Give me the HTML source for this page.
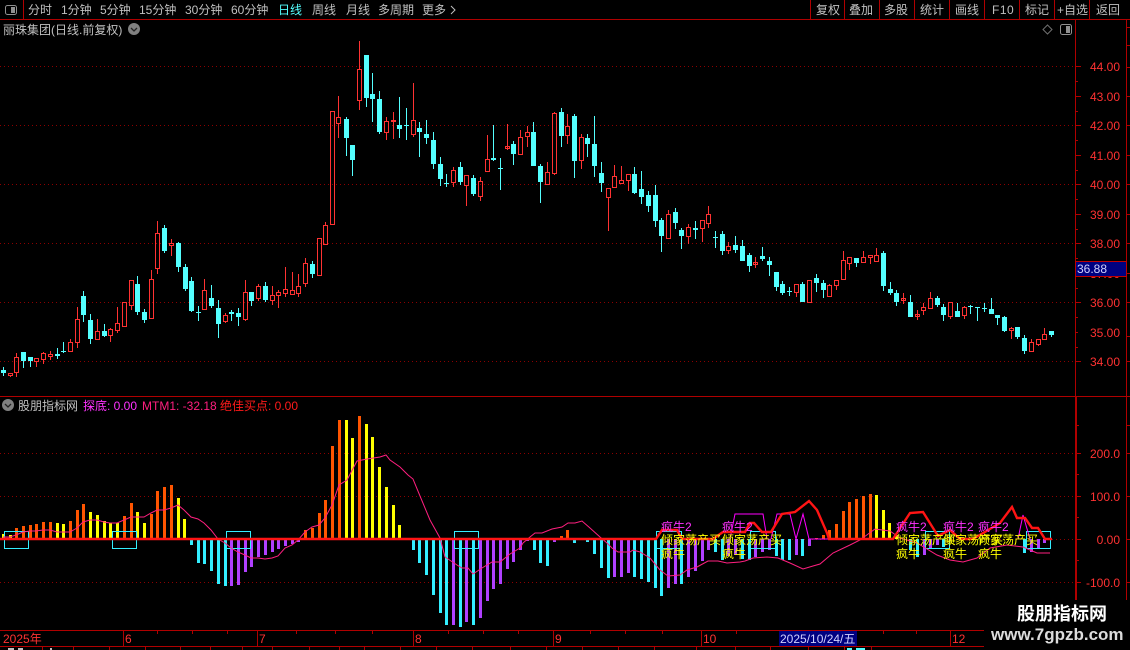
<!DOCTYPE html>
<html lang="zh"><head><meta charset="utf-8"><title>丽珠集团</title>
<style>
html,body{margin:0;padding:0;background:#000;width:1130px;height:650px;overflow:hidden}
svg{display:block}
text{font-family:"Liberation Sans","WenQuanYi Zen Hei","Noto Sans CJK SC",sans-serif;font-size:12px}
.t{fill:#c0c0c0}
.a{fill:#ff3232;text-anchor:end}
.d{fill:#ff3232}
.y{fill:#ffff00}
.m{fill:#ff32ff}
</style></head><body>
<svg width="1130" height="650" viewBox="0 0 1130 650" xmlns="http://www.w3.org/2000/svg">
<rect width="1130" height="650" fill="#000"/>
<!-- toolbar -->
<g fill="none" stroke="#b00000" shape-rendering="crispEdges">
<path d="M0 19.5H1130M23.5 0V19M810.5 0V19M844.5 0V19M879.5 0V19M914.5 0V19M949.5 0V19M984.5 0V19M1019.5 0V19M1054.5 0V19M1089.5 0V19M1126.5 20V600M1075.5 20V600M0 396.5H1130M0 630.5H984M0 646.5H984"/>
<path d="M1076 66.5h5M1076 96.5h5M1076 125.5h5M1076 155.5h5M1076 184.5h5M1076 214.5h5M1076 243.5h5M1076 302.5h5M1076 332.5h2M1076 361.5h5M1076 81.5h2M1076 111.5h2M1076 140.5h2M1076 170.5h2M1076 199.5h2M1076 229.5h2M1076 258.5h2M1076 288.5h2M1076 317.5h2M1076 347.5h2M1076 453.5h5M1076 496.5h5M1076 539.5h5M1076 582.5h5M1076 425.5h3M1076 474.5h3M1076 517.5h3M1076 560.5h3"/>
<path d="M1127 27.5h3M1127 45.5h3M1127 67.5h3M1127 96.5h3M1127 125.5h3M1127 155.5h3M1127 184.5h3M1127 214.5h3M1127 243.5h3M1127 273.5h3M1127 302.5h3M1127 336.5h3M1127 361.5h3M1127 425.5h3M1127 453.5h3M1127 496.5h3M1127 539.5h3M1127 582.5h3"/>
<path d="M123.5 631V646M257.5 631V646M413.5 631V646M553.5 631V646M701.5 631V646M950.5 631V646M157.5 631v3M192.5 631v3M227.5 631v3M296.5 631v3M335.5 631v3M372.5 631v3M448.5 631v3M483.5 631v3M518.5 631v3M590.5 631v3M625.5 631v3M662.5 631v3M736.5 631v3M883.5 631v3M916.5 631v3M42.5 647V650M73.5 647V650M109.5 647V650M145.5 647V650M180.5 647V650M210.5 647V650M242.5 647V650M272.5 647V650M309.5 647V650M339.5 647V650M364.5 647V650M400.5 647V650M436.5 647V650M472.5 647V650M510.5 647V650M546.5 647V650M582.5 647V650M618.5 647V650M654.5 647V650M696.5 647V650M735.5 647V650M770.5 647V650M808.5 647V650M844.5 647V650M871.5 647V650"/>
</g>
<rect x="1075" y="397" width="2" height="203" fill="#b00000"/>
<g stroke="#8c0000" stroke-dasharray="1 3" fill="none" shape-rendering="crispEdges">
<path d="M0 66.5H1075M0 125.5H1075M0 184.5H1075M0 243.5H1075M0 302.5H1075M0 361.5H1075M0 453.5H1075M0 496.5H1075M0 539.5H1075M0 582.5H1075"/>
</g>
<!-- toolbar icon & labels -->
<rect x="5.5" y="5.5" width="11" height="9" rx="2" fill="none" stroke="#909090"/><rect x="11" y="7" width="4" height="6" fill="#909090"/>
<g class="t">
<text class="t" x="28" y="14">分时</text><text class="t" x="61" y="14">1分钟</text><text class="t" x="100" y="14">5分钟</text><text class="t" x="139" y="14">15分钟</text><text class="t" x="185" y="14">30分钟</text><text class="t" x="231" y="14">60分钟</text>
<text x="278" y="14" fill="#54ffff">日线</text>
<text class="t" x="312" y="14">周线</text><text class="t" x="346" y="14">月线</text><text class="t" x="378" y="14">多周期</text><text class="t" x="422" y="14">更多</text>
<text class="t" x="816" y="14">复权</text><text class="t" x="849" y="14">叠加</text><text class="t" x="884" y="14">多股</text><text class="t" x="920" y="14">统计</text><text class="t" x="955" y="14">画线</text><text class="t" x="992" y="14" style="letter-spacing:.5px">F10</text><text class="t" x="1025" y="14">标记</text><text class="t" x="1057" y="14">+自选</text><text class="t" x="1096" y="14">返回</text>
<text class="t" x="3" y="34">丽珠集团(日线.前复权)</text>
<text class="t" x="18" y="410">股朋指标网</text>
</g>
<path d="M451 6l4 4-4 4" fill="none" stroke="#c0c0c0"/>
<circle cx="134" cy="29" r="6" fill="#808080"/><path d="M131 28l3 3 3-3" fill="none" stroke="#222" stroke-width="1.3"/>
<circle cx="8" cy="405" r="6" fill="#808080"/><path d="M5 404l3 3 3-3" fill="none" stroke="#222" stroke-width="1.3"/>
<path d="M1047.5 25l4.5 4.5-4.5 4.5-4.5-4.5z" fill="none" stroke="#707070"/>
<rect x="1060.5" y="24.5" width="11" height="10" rx="2" fill="none" stroke="#909090"/><rect x="1066" y="26" width="4" height="7" fill="#909090"/>
<text x="83" y="410" class="m">探底: 0.00</text>
<text x="142" y="410" fill="#ff1f7f">MTM1: -32.18</text>
<text x="220" y="410" fill="#ff1a1a">绝佳买点: 0.00</text>
<!-- price axis -->
<g class="a">
<text class="a" x="1120" y="71">44.00</text><text class="a" x="1120" y="101">43.00</text><text class="a" x="1120" y="130">42.00</text><text class="a" x="1120" y="160">41.00</text><text class="a" x="1120" y="189">40.00</text><text class="a" x="1120" y="219">39.00</text><text class="a" x="1120" y="248">38.00</text><text class="a" x="1120" y="278">37.00</text><text class="a" x="1120" y="307">36.00</text><text class="a" x="1120" y="337">35.00</text><text class="a" x="1120" y="366">34.00</text>
<text class="a" x="1120" y="458">200.0</text><text class="a" x="1120" y="501">100.0</text><text class="a" x="1120" y="544">0.00</text><text class="a" x="1120" y="587">-100.0</text>
</g>
<rect x="1075.5" y="261.5" width="51" height="15" fill="#000080" stroke="#c00000"/>
<text x="1077" y="273" fill="#d0d0ff">36.88</text>
<!-- candles -->
<g fill="none" shape-rendering="crispEdges">
<path stroke="#54ffff" d="M3.5 367V376M23.5 352V368M30.5 357V367M57.5 348V359M63.5 342V353M83.5 291V322M90.5 314V344M104.5 324V337M137.5 276V315M144.5 309V323M164.5 225V253M178.5 242V272M185.5 264V291M191.5 277V312M198.5 306V321M211.5 285V308M218.5 300V338M231.5 310V321M238.5 308V326M251.5 292V306M265.5 282V302M312.5 261V278M346.5 117V156M352.5 145V176M366.5 55V107M372.5 73V122M379.5 91V134M399.5 97V138M406.5 108V140M419.5 122V157M426.5 120V144M433.5 132V169M440.5 157V186M446.5 174V187M460.5 162V185M473.5 175V196M493.5 125V161M500.5 158V190M513.5 141V165M533.5 122V166M540.5 164V203M561.5 108V147M574.5 114V178M587.5 134V157M594.5 116V177M601.5 162V192M634.5 167V194M641.5 171V204M648.5 191V212M655.5 185V227M661.5 218V252M675.5 208V229M681.5 228V249M695.5 221V239M715.5 231V248M722.5 231V255M735.5 236V253M742.5 240V261M749.5 253V272M762.5 247V261M769.5 257V276M776.5 272V291M782.5 281V295M789.5 287V296M802.5 282V302M816.5 274V292M823.5 280V298M856.5 258V267M883.5 251V291M890.5 282V295M896.5 290V306M910.5 295V317M937.5 296V307M943.5 304V321M957.5 303V317M970.5 305V314M977.5 307V321M984.5 303V312M991.5 298V314M997.5 315V325M1004.5 316V332M1017.5 327V339M1024.5 335V354M1051.5 331V337"/>
<path stroke="#54ffff" stroke-width="5" d="M3.5 370V373M23.5 352V361M30.5 357V361M57.5 354V356M63.5 351V352M83.5 296V315M90.5 320V339M104.5 331V336M137.5 284V312M144.5 312V320M164.5 228V251M178.5 243V267M185.5 267V289M191.5 281V311M198.5 312V313M211.5 298V306M218.5 308V324M231.5 312V314M238.5 313V317M251.5 292V301M265.5 286V300M312.5 264V274M346.5 119V138M352.5 145V160M366.5 55V98M372.5 94V99M379.5 99V132M399.5 125V129M406.5 125V126M419.5 128V132M426.5 134V138M433.5 140V164M440.5 164V179M446.5 183V184M460.5 167V182M473.5 178V194M493.5 158V160M500.5 168V169M513.5 144V154M533.5 132V166M540.5 166V182M561.5 112V136M574.5 116V161M587.5 138V144M594.5 144V166M601.5 173V183M634.5 174V193M641.5 189V197M648.5 195V206M655.5 195V221M661.5 220V236M675.5 212V223M681.5 230V236M695.5 228V230M715.5 237V238M722.5 234V251M735.5 245V250M742.5 246V261M749.5 255V266M762.5 256V259M769.5 261V265M776.5 272V287M782.5 284V293M789.5 291V292M802.5 284V302M816.5 278V283M823.5 283V290M856.5 258V263M883.5 253V286M890.5 289V293M896.5 293V302M910.5 302V317M937.5 298V305M943.5 307V315M957.5 311V317M970.5 306V307M977.5 307V308M984.5 308V309M991.5 309V314M997.5 315V318M1004.5 317V331M1017.5 327V337M1024.5 338V351M1051.5 331V335"/>
<path stroke="#ff3232" d="M10.5 376V377M16.5 353V357M16.5 373V377M36.5 362V367M43.5 352V353M43.5 360V364M50.5 351V354M50.5 357V360M70.5 339V342M77.5 307V319M77.5 343V348M97.5 319V331M110.5 328V329M110.5 336V342M117.5 307V323M117.5 331V333M131.5 306V310M151.5 270V279M157.5 221V233M157.5 269V274M171.5 239V243M171.5 246V256M204.5 279V290M225.5 313V315M225.5 322V323M245.5 280V292M245.5 320V321M258.5 284V286M258.5 299V301M272.5 286V295M272.5 301V305M278.5 290V292M278.5 296V308M285.5 267V289M285.5 294V297M292.5 272V290M298.5 274V286M298.5 294V297M305.5 258V263M305.5 284V287M325.5 222V225M338.5 96V117M338.5 124V138M359.5 41V69M359.5 101V110M386.5 117V121M386.5 133V140M393.5 112V139M413.5 83V120M413.5 135V137M453.5 167V170M453.5 183V187M466.5 186V206M480.5 177V181M480.5 197V201M487.5 135V159M507.5 124V150M520.5 130V137M527.5 126V132M527.5 137V147M547.5 162V172M554.5 112V113M554.5 174V175M567.5 114V126M567.5 136V144M581.5 134V137M581.5 161V169M608.5 198V231M614.5 165V176M621.5 166V180M628.5 181V191M668.5 210V214M688.5 224V227M688.5 237V244M702.5 229V242M708.5 206V214M708.5 224V228M728.5 242V246M728.5 251V254M755.5 257V268M796.5 293V297M829.5 284V285M836.5 286V290M843.5 251V260M849.5 264V270M863.5 251V257M870.5 258V264M876.5 248V255M903.5 293V304M917.5 310V320M923.5 303V307M923.5 311V315M930.5 292V298M950.5 317V319M964.5 306V307M964.5 316V319M1011.5 327V328M1011.5 331V339M1031.5 339V342M1038.5 345V346M1044.5 328V334M1044.5 340V340"/>
<path stroke="#ff3232" d="M8.5 373.5h4V375.5h-4zM14.5 357.5h4V372.5h-4zM34.5 358.5h4V361.5h-4zM41.5 353.5h4V359.5h-4zM48.5 354.5h4V356.5h-4zM68.5 342.5h4V351.5h-4zM75.5 319.5h4V342.5h-4zM95.5 331.5h4V339.5h-4zM108.5 329.5h4V335.5h-4zM115.5 323.5h4V330.5h-4zM122.5 302.5h4V326.5h-4zM129.5 280.5h4V305.5h-4zM149.5 279.5h4V318.5h-4zM155.5 233.5h4V268.5h-4zM169.5 243.5h4V245.5h-4zM202.5 290.5h4V309.5h-4zM223.5 315.5h4V321.5h-4zM243.5 292.5h4V319.5h-4zM256.5 286.5h4V298.5h-4zM270.5 295.5h4V300.5h-4zM276.5 292.5h4V295.5h-4zM283.5 289.5h4V293.5h-4zM290.5 290.5h4V294.5h-4zM296.5 286.5h4V293.5h-4zM303.5 263.5h4V283.5h-4zM317.5 238.5h4V275.5h-4zM323.5 225.5h4V244.5h-4zM330.5 111.5h4V224.5h-4zM336.5 117.5h4V123.5h-4zM357.5 69.5h4V100.5h-4zM384.5 121.5h4V132.5h-4zM391.5 120.5h4V121.5h-4zM411.5 120.5h4V134.5h-4zM451.5 170.5h4V182.5h-4zM464.5 175.5h4V185.5h-4zM478.5 181.5h4V196.5h-4zM485.5 159.5h4V171.5h-4zM505.5 146.5h4V148.5h-4zM518.5 137.5h4V154.5h-4zM525.5 132.5h4V136.5h-4zM545.5 172.5h4V184.5h-4zM552.5 113.5h4V173.5h-4zM565.5 126.5h4V135.5h-4zM579.5 137.5h4V160.5h-4zM606.5 188.5h4V197.5h-4zM612.5 176.5h4V187.5h-4zM619.5 180.5h4V183.5h-4zM626.5 174.5h4V180.5h-4zM666.5 214.5h4V238.5h-4zM686.5 227.5h4V236.5h-4zM700.5 220.5h4V228.5h-4zM706.5 214.5h4V223.5h-4zM726.5 246.5h4V250.5h-4zM753.5 262.5h4V264.5h-4zM794.5 284.5h4V292.5h-4zM807.5 280.5h4V302.5h-4zM827.5 285.5h4V296.5h-4zM834.5 280.5h4V285.5h-4zM841.5 260.5h4V279.5h-4zM847.5 257.5h4V263.5h-4zM861.5 257.5h4V262.5h-4zM868.5 255.5h4V257.5h-4zM874.5 255.5h4V261.5h-4zM901.5 298.5h4V300.5h-4zM915.5 314.5h4V316.5h-4zM921.5 307.5h4V310.5h-4zM928.5 298.5h4V308.5h-4zM948.5 302.5h4V316.5h-4zM962.5 307.5h4V315.5h-4zM1009.5 328.5h4V330.5h-4zM1029.5 342.5h4V351.5h-4zM1036.5 339.5h4V344.5h-4zM1042.5 334.5h4V339.5h-4z"/>
</g>
<!-- indicator bars -->
<g fill="none" stroke-width="3" shape-rendering="crispEdges">
<path stroke="#ff5500" d="M16.5 539V528M23.5 539V526M30.5 539V525M36.5 539V524M43.5 539V522M50.5 539V522M70.5 539V521M77.5 539V510M83.5 539V504M124.5 539V516M131.5 539V503M151.5 539V514M157.5 539V491M164.5 539V487M171.5 539V485M305.5 539V530M312.5 539V528M319.5 539V513M325.5 539V500M332.5 539V446M339.5 539V420M359.5 539V416M561.5 539V536M567.5 539V530M816.5 539V538M823.5 539V535M829.5 539V530M836.5 539V524M843.5 539V511M849.5 539V502M856.5 539V499M863.5 539V496M870.5 539V494"/>
<path stroke="#ffff00" d="M3.5 539V534M10.5 539V535M57.5 539V523M63.5 539V524M90.5 539V512M97.5 539V515M104.5 539V521M110.5 539V523M117.5 539V523M137.5 539V512M144.5 539V523M178.5 539V498M184.5 539V519M346.5 539V420M352.5 539V438M366.5 539V424M372.5 539V437M379.5 539V467M386.5 539V487M393.5 539V505M399.5 539V525M876.5 539V495M883.5 539V510M889.5 539V523M896.5 539V535"/>
<path stroke="#33eeff" d="M191.5 539V545M198.5 539V563M204.5 539V564M211.5 539V571M218.5 539V584M225.5 539V586M406.5 539V540M413.5 539V550M419.5 539V563M426.5 539V575M433.5 539V595M440.5 539V613M446.5 539V625M460.5 539V627M473.5 539V625M534.5 539V550M540.5 539V563M547.5 539V566M574.5 539V543M587.5 539V542M594.5 539V554M601.5 539V568M608.5 539V578M634.5 539V577M641.5 539V579M648.5 539V582M655.5 539V588M661.5 539V596M681.5 539V584M715.5 539V552M722.5 539V560M742.5 539V559M749.5 539V560M776.5 539V556M782.5 539V560M789.5 539V560M802.5 539V556M910.5 539V550M917.5 539V557M943.5 539V547M1024.5 539V553"/>
<path stroke="#b040ff" d="M231.5 539V586M238.5 539V585M245.5 539V572M251.5 539V567M258.5 539V557M265.5 539V555M272.5 539V552M278.5 539V549M285.5 539V546M292.5 539V544M298.5 539V542M453.5 539V625M466.5 539V622M480.5 539V618M487.5 539V601M493.5 539V589M500.5 539V584M507.5 539V569M513.5 539V562M520.5 539V550M527.5 539V541M554.5 539V542M581.5 539V540M614.5 539V577M621.5 539V577M628.5 539V573M668.5 539V588M675.5 539V584M688.5 539V577M695.5 539V571M702.5 539V561M708.5 539V550M728.5 539V556M735.5 539V555M755.5 539V557M762.5 539V552M769.5 539V550M796.5 539V555M809.5 539V546M924.5 539V555M930.5 539V548M937.5 539V545M1031.5 539V552M1038.5 539V548M1044.5 539V543"/>
</g>
<!-- boxes -->
<g fill="none" stroke="#33eeff" shape-rendering="crispEdges">
<path d="M4.5 531.5h24v17h-24zM112.5 531.5h24v17h-24zM226.5 531.5h24v17h-24zM454.5 531.5h24v17h-24zM656.5 531.5h25v17h-25zM750.5 531.5h25v17h-25zM925.5 531.5h24v17h-24zM1026.5 531.5h24v17h-24z"/>
</g>
<!-- MTM line -->
<polyline fill="none" stroke="#ff1f7f" points="3,537 10,537 16,535 23,532 30,531 36,531 43,530 50,530 57,532 63,532 70,532 77,528 83,522 90,520 97,520 104,522 110,523 117,523 124,520 131,517 137,517 144,517 151,513 157,510 164,510 171,508 178,505 184,510 191,517 198,519 204,523 211,530 218,539 225,543 231,548 238,552 245,555 251,558 258,558 265,559 272,558 278,556 285,548 292,545 298,540 305,532 312,527 319,525 325,518 332,505 339,485 347,480 357,461 367,459 380,457 386,455 390,460 400,467 408,475 413,479 420,496 430,520 440,538 444,553 445,557 457,565 462,568 468,568 473,574 482,568 492,562 500,562 510,554 520,548 523,543 530,537 535,533 542,533 552,529 562,527 568,523 575,523 582,521 590,528 600,537 607,543 612,548 618,552 630,552 633,550 640,552 650,558 660,570 668,576 680,575 687,570 697,567 708,561 718,561 727,563 740,562 745,561 753,558 767,557 778,558 790,563 803,569 813,566 820,564 833,553 850,545 860,540 875,529 890,531 900,538 917,543 937,555 950,560 963,562 977,558 990,548 1007,545 1023,547 1037,553 1050,553"/>
<!-- magenta polyline -->
<g fill="none" stroke="#ff00ff" stroke-width="1">
<polyline points="730,539 735,514 763,514 767,539"/>
<polyline points="771,539 777,514 790,514 796,539 803,514 809,539 830,539"/>
<polyline points="1018,539 1023,515 1030,539"/>
</g>
<!-- zero + signal red -->
<path d="M0 539H656L662 530H677L682 539H713L723 532H745L750 523H754L762 532H771L782 514L795 512L809 501L817 510L827 533L829 539H893L910 513L923 512L938 536L950 530L960 539H973L1000 523L1012 507L1017 518L1025 518L1032 528L1038 528L1045 539H1052" fill="none" stroke="#ff1414" stroke-width="2.4"/>
<!-- signal text -->
<g>
<text class="m" x="661" y="531">疯牛2</text><text class="m" x="722" y="531">疯牛2</text><text class="m" x="896" y="531">疯牛2</text><text class="m" x="943" y="531">疯牛2</text><text class="m" x="978" y="531">疯牛2</text>
<text class="y" x="661" y="544">倾家荡产买</text><text class="y" x="722" y="544">倾家荡产买</text><text class="y" x="896" y="544">倾家荡产买</text><text class="y" x="943" y="544">倾家荡产买</text><text class="y" x="978" y="544">倾家荡产买</text>
<text class="y" x="661" y="558">疯牛</text><text class="y" x="722" y="558">疯牛</text><text class="y" x="896" y="558">疯牛</text><text class="y" x="943" y="558">疯牛</text><text class="y" x="978" y="558">疯牛</text>
</g>
<!-- date axis -->
<text class="d" x="3" y="643">2025年</text><text class="d" x="125" y="643">6</text><text class="d" x="259" y="643">7</text><text class="d" x="415" y="643">8</text><text class="d" x="555" y="643">9</text><text class="d" x="703" y="643">10</text><text class="d" x="952" y="643">12</text>
<rect x="779" y="631" width="78" height="15" fill="#000080"/>
<text x="780" y="643" fill="#d0d0ff">2025/10/24/五</text>
<rect x="8" y="648" width="6" height="2" fill="#c0c0c0"/><rect x="18" y="648" width="5" height="2" fill="#c0c0c0"/><rect x="50" y="648" width="2" height="2" fill="#c0c0c0"/><rect x="847" y="648" width="5" height="2" fill="#54ffff"/><rect x="856" y="648" width="9" height="2" fill="#54ffff"/>
<!-- watermark -->
<rect x="984" y="600" width="146" height="50" fill="#000"/>
<text x="1017" y="620" fill="#fff" style="font-family:'Noto Sans CJK SC','WenQuanYi Zen Hei',sans-serif;font-size:18px;font-weight:700">股朋指标网</text>
<text x="991" y="640" fill="#dcdcdc" style="font-family:'Liberation Sans',sans-serif;font-size:17px;font-weight:700">www.7gpzb.com</text>
</svg>
</body></html>
